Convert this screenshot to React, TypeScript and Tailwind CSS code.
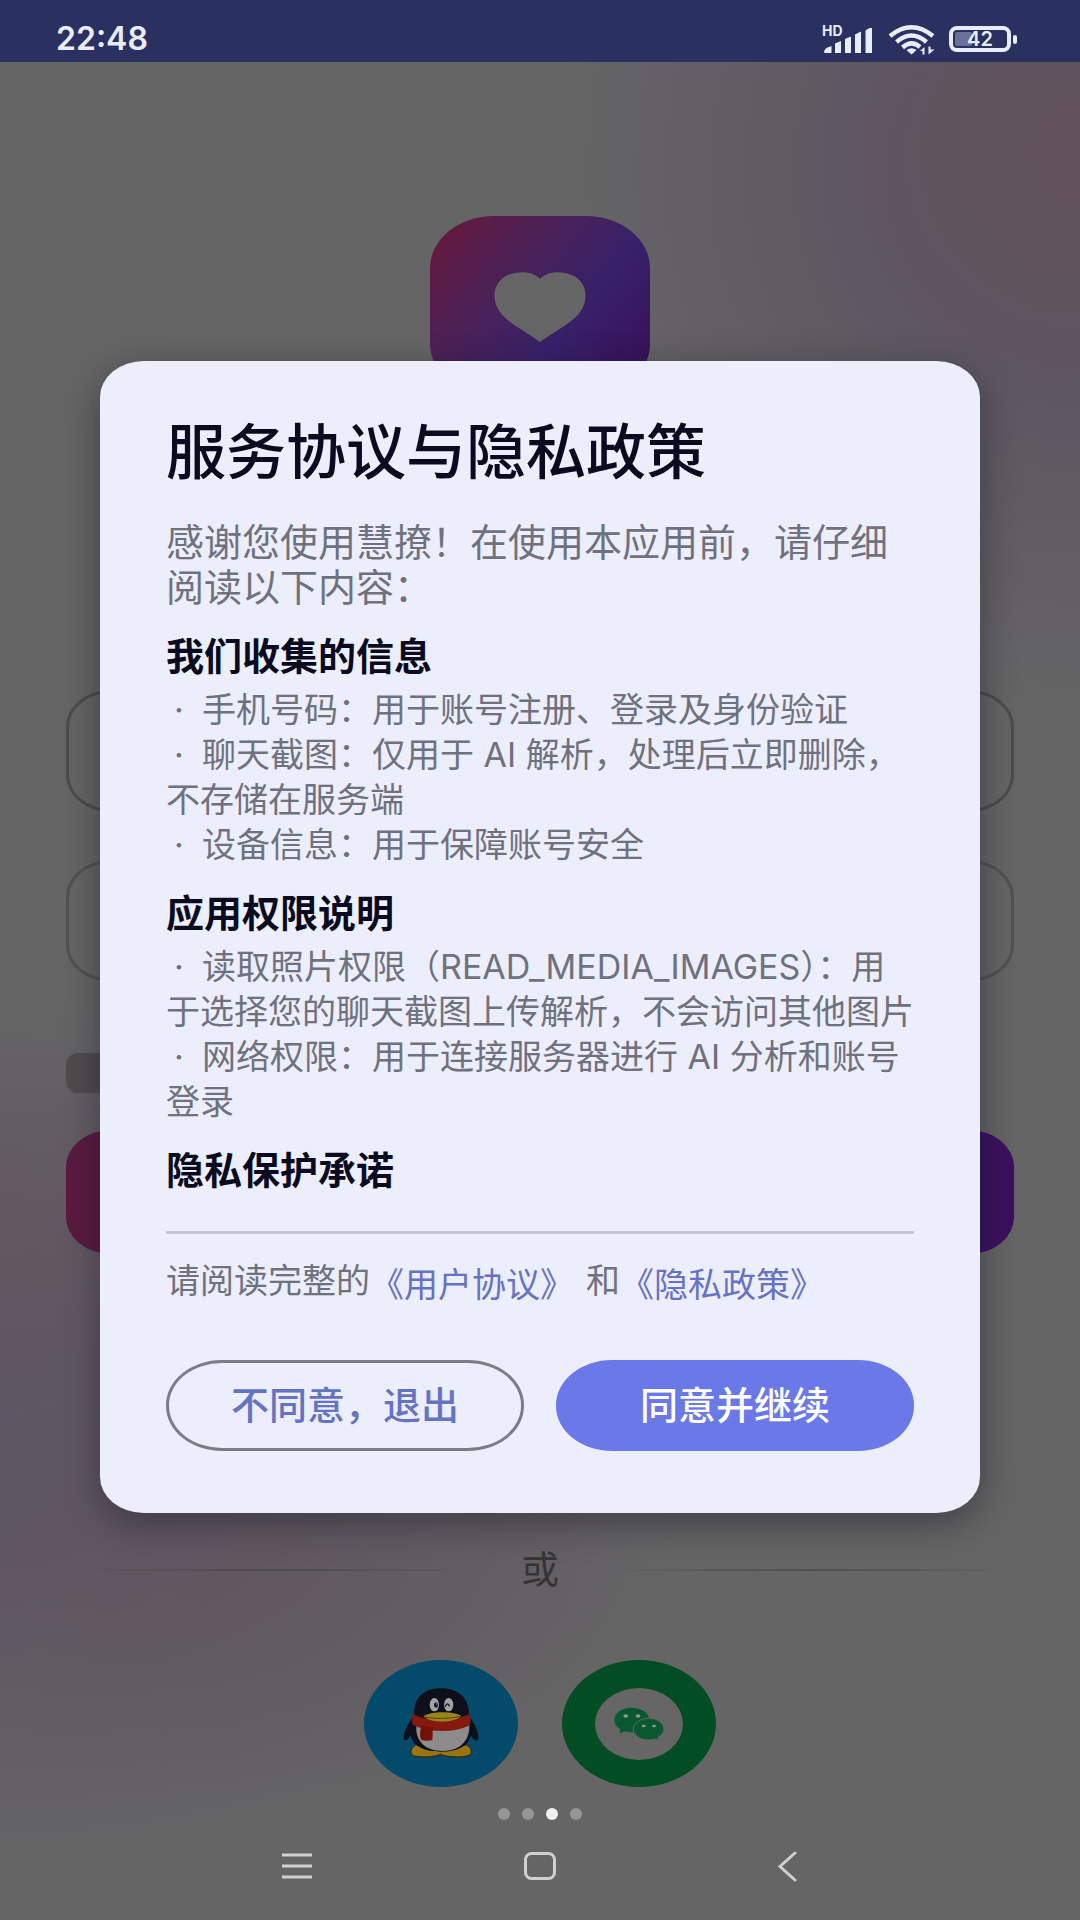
// App.tsx
import { useState } from "react";

const sections = [
    {
        title: "我们收集的信息",
        items: [
            ["手机号码：用于账号注册、登录及身份验证"],
            ["聊天截图：仅用于 AI 解析，处理后立即删除，", "不存储在服务端"],
            ["设备信息：用于保障账号安全"],
        ],
    },
    {
        title: "应用权限说明",
        items: [
            ["读取照片权限（READ_MEDIA_IMAGES）：用", "于选择您的聊天截图上传解析，不会访问其他图片"],
            ["网络权限：用于连接服务器进行 AI 分析和账号", "登录"],
        ],
    },
    { title: "隐私保护承诺", items: [] },
];

function StatusBar() {
    return (
        <header className="flex h-[62px] items-end justify-between bg-[#2a3060] pr-[62px] pb-[3px] pl-14 text-[#e9edfb]">
            <span className="text-[32px] leading-10 font-semibold">22:48</span>
            <div className="flex items-center gap-[14px] pb-1">
                <svg className="h-8 w-[52px]" viewBox="0 0 52 32" fill="currentColor">
                    <text x="0" y="13" fontSize="14" fontWeight="700">HD</text>
                    <path d="M2 29q0-4 7.500-6v7h-6q-1.500 0-1.500-1z" />
                    <path d="M13 20.500l6-2.500V30h-6z" />
                    <path d="M23 16l6-2.500V30h-6z" />
                    <path d="M33 11.500l6-3V30h-6z" />
                    <path d="M43.500 7.500l4-2.500h2.500V30h-6.500z" />
                </svg>
                <svg className="h-8 w-[47px]" viewBox="0 0 47 32" fill="none" stroke="currentColor" strokeWidth="4.500">
                    <path d="M2 13Q23.500-4.500 45 13" />
                    <path d="M8.500 19Q23.500 6 38.500 19" />
                    <path d="M14.500 24.500Q23.500 16.500 32 24" />
                    <path d="M18.500 27q5-3.500 10 0l-5 4.500z" fill="currentColor" stroke="none" />
                    <path d="M36.500 31.500v-7.500l-4.500 4h2.500v3.500zM40.500 31.500v-8h2v3h4z" fill="currentColor" stroke="none" />
                </svg>
                <svg className="h-8 w-[69px]" viewBox="0 0 69 32">
                    <rect x="6" y="9" width="17" height="14" rx="2" fill="#6a7098" />
                    <rect x="2" y="5" width="58" height="22" rx="6" fill="none" stroke="currentColor" strokeWidth="4" />
                    <rect x="64" y="12" width="4" height="9" rx="2" fill="currentColor" />
                    <text x="31" y="23" fontSize="20" fontWeight="600" textAnchor="middle" fill="currentColor">42</text>
                </svg>
            </div>
        </header>
    );
}

function QQIcon() {
    return (
        <svg className="h-[71px] w-[76px]" viewBox="190 205 228 213">
            <path d="M228 376c-14 8-18 22-10 31 14 8 74 6 84-4 12 10 74 12 88 3 10-9 3-23-8-30z" fill="#9a7412" stroke="#2c220a" strokeWidth="3" />
            <path d="M224 288c-22 26-34 52-31 70 4 8 14 2 20-12 6 34 42 50 92 50s84-18 88-50c8 16 20 22 23 12 2-20-10-46-29-70z" fill="#0c0f19" />
            <path d="M224 292c-6-56 26-86 80-86s88 32 83 86z" fill="#0d0f1a" />
            <path d="M231 310c-8 52 24 84 78 84s86-34 79-86z" fill="#8d8b8b" />
            <path d="M218 282c0 18-2 28 2 34 52 24 122 24 168 2 6-8 6-22 2-36-48 26-124 26-172 0z" fill="#86190f" />
            <path d="M246 318c-6 14-6 34-1 43 10 3 24 3 33 0 2-12 0-28 2-38z" fill="#731109" />
            <path d="M251 290c18-14 88-18 114-1-16 20-92 24-114 1z" fill="#9a851a" />
            <path d="M254 292c34 6 74 6 108-2" fill="none" stroke="#544307" strokeWidth="3" />
            <ellipse cx="284" cy="255" rx="14" ry="20" fill="#a3a3a5" />
            <ellipse cx="327" cy="255" rx="14" ry="20" fill="#a3a3a5" />
            <ellipse cx="289" cy="256" rx="6" ry="8" fill="#11131d" />
            <circle cx="291" cy="253" r="2" fill="#a3a3a5" />
            <path d="M317 260q6-14 12-1" fill="none" stroke="#11131d" strokeWidth="4" strokeLinecap="round" />
        </svg>
    );
}

function WechatIcon() {
    return (
        <svg className="h-[34px] w-[50px]" viewBox="822 260 150 100">
            <path d="M875 261c-29 0-52 16-52 37 0 12 8 22 18 28l-3 13 16-7c46 12 74-10 74-34 0-21-24-37-53-37z" fill="#0a5831" />
            <path d="M926 293c-26 0-46 14-46 33s20 32 46 32c8 0 15-1 21-3l10 5-3-10c10-6 18-14 18-24 0-19-20-33-46-33z" fill="#0a5831" stroke="#666" strokeWidth="3" />
            <g fill="#8c9a90">
                <ellipse cx="857" cy="286" rx="7" ry="5" />
                <ellipse cx="894" cy="286" rx="7" ry="5" />
                <ellipse cx="911" cy="316" rx="6" ry="4" />
                <ellipse cx="942" cy="316" rx="6" ry="4" />
            </g>
        </svg>
    );
}

function LoginPage() {
    return (
        <main className="flex flex-col items-center px-[66px] pt-[154px]">
            <div className="flex h-[180px] w-[220px] justify-center rounded-[64px/52px] bg-[linear-gradient(130deg,#621a40_8%,#4a2158_35%,#38216a_62%,#380f58_95%)] pt-14">
                <svg className="h-[70px] w-[92px]" viewBox="0 0 92 70" fill="#666">
                    <path d="M46 7C38-2 22-1 12 4 0 11-2 24 3 35c6 14 27 23 43 35 16-12 37-21 43-35 5-11 3-24-9-31C70-1 54-2 46 7z" />
                </svg>
            </div>

            <form className="mt-[294px] flex w-full flex-col" onSubmit={(e) => e.preventDefault()}>
                <input aria-label="手机号" type="tel" className="h-[122px] w-full rounded-[45px/37px] border-[3px] border-[#4c4c4c]" />
                <input aria-label="验证码" type="text" className="mt-12 h-[122px] w-full rounded-[45px/37px] border-[3px] border-[#505252]" />
                <input aria-label="同意协议" type="checkbox" className="mt-[71px] h-10 w-14 appearance-none rounded-xl bg-[#4e4c4d]" />
                <button aria-label="登录" className="mt-[37px] h-[124px] w-full rounded-[45px/37px] bg-linear-to-r from-[#5b1a40] to-[#3b1060]" />
            </form>

            <div className="mt-[293px] flex w-full items-center gap-12">
                <div className="h-[2px] flex-1 bg-linear-to-r from-transparent via-[#504c4f] to-transparent" />
                <span className="text-[38px] leading-[45px] text-[#343434]">或</span>
                <div className="h-[2px] flex-1 bg-linear-to-r from-transparent via-[#504f4f] to-transparent" />
            </div>

            <div className="mt-[68px] flex gap-11">
                <button aria-label="QQ" className="flex h-[127px] w-[154px] items-center justify-center rounded-[50%] bg-[#044a6a]">
                    <QQIcon />
                </button>
                <button aria-label="微信" className="flex h-[127px] w-[154px] items-center justify-center rounded-[50%] bg-[#034d25]">
                    <span className="flex h-[72px] w-[88px] items-center justify-center rounded-[50%] bg-[#666]">
                        <WechatIcon />
                    </span>
                </button>
            </div>
        </main>
    );
}

function NavBar() {
    return (
        <nav className="flex flex-col items-center pt-[21px] pb-9 text-[#d0d0d0]">
            <div className="flex gap-3">
                <i className="size-3 rounded-full bg-[#959595]" />
                <i className="size-3 rounded-full bg-[#959595]" />
                <i className="size-3 rounded-full bg-[#f0f0f0]" />
                <i className="size-3 rounded-full bg-[#959595]" />
            </div>
            <div className="mt-[30px] flex w-full items-center justify-between px-[281px]">
                <button aria-label="菜单">
                    <svg className="h-8 w-8" viewBox="0 0 32 32" stroke="currentColor" strokeWidth="3">
                        <path d="M1 5h30M1 16h30M1 27h30" />
                    </svg>
                </button>
                <button aria-label="主页">
                    <svg className="h-8 w-8" viewBox="0 0 32 32" fill="none" stroke="currentColor" strokeWidth="3">
                        <rect x="1.500" y="3.500" width="29" height="25" rx="6" />
                    </svg>
                </button>
                <button aria-label="返回">
                    <svg className="h-8 w-8" viewBox="0 0 32 32" fill="none" stroke="currentColor" strokeWidth="3" strokeLinecap="round">
                        <path d="M28 3L13 16.500 28 30" />
                    </svg>
                </button>
            </div>
        </nav>
    );
}

function PrivacyDialog({ onClose }: { onClose: () => void }) {
    return (
        <div className="absolute inset-x-0 top-0 px-[100px] pt-[361px]">
            <div
                role="dialog"
                aria-labelledby="dialog-title"
                className="rounded-[44px/36px] bg-[#edeefc] px-[66px] pt-[61px] pb-[62px] shadow-[0_10px_36px_rgba(20,20,30,0.45)]"
            >
                <h1 id="dialog-title" className="text-[60px] leading-[60px] font-medium text-[#0a0b20]">
                    服务协议与隐私政策
                </h1>
                <p className="mt-[38px] text-[38px] leading-[45px] text-[#6f717e]">
                    感谢您使用慧撩！在使用本应用前，请仔细
                    <br />
                    阅读以下内容：
                </p>

                {sections.map((section) => (
                    <section key={section.title} className="mt-6">
                        <h2 className="text-[38px] leading-[45px] font-bold text-[#0a0b20]">{section.title}</h2>
                        {section.items.length > 0 && (
                            <ul className="mt-2 text-[34px] leading-[45px] text-[#6f717e]">
                                {section.items.map((lines) => (
                                    <li key={lines[0]}>
                                        <span className="inline-block w-9 pl-2">·</span>
                                        {lines[0]}
                                        {lines[1] && <br />}
                                        {lines[1]}
                                    </li>
                                ))}
                            </ul>
                        )}
                    </section>
                ))}

                <hr className="mt-[38px] border-t-[3px] border-[#c3c4d1]" />

                <p className="mt-6 flex text-[34px] leading-[45px] text-[#6f717e]">
                    请阅读完整的
                    <a href="#terms" className="pt-1 text-[#6573c4]">《用户协议》</a>
                    <span className="pl-3">和</span>
                    <a href="#privacy" className="pt-1 text-[#6573c4]">《隐私政策》</a>
                </p>

                <div className="mt-[53px] grid grid-cols-2 gap-8 text-[38px] leading-[45px] font-medium">
                    <button onClick={onClose} className="h-[91px] rounded-[56px/45px] border-[3px] border-[#7a7c88] text-[#6573c4]">
                        不同意，退出
                    </button>
                    <button onClick={onClose} className="h-[91px] rounded-[56px/45px] bg-[#6b78e8] text-white">
                        同意并继续
                    </button>
                </div>
            </div>
        </div>
    );
}

export default function App() {
    const [open, setOpen] = useState(true);

    return (
        <div className="relative min-h-screen bg-[#656565] bg-[radial-gradient(ellipse_260px_260px_at_100%_8%,#66505499,transparent),radial-gradient(ellipse_520px_540px_at_100%_9%,#5d5562_35%,transparent),radial-gradient(ellipse_260px_200px_at_0%_64%,#66545c80,transparent),radial-gradient(ellipse_420px_220px_at_22%_82%,#64545e80,transparent),radial-gradient(ellipse_700px_440px_at_0%_75%,#5e5664_25%,transparent)] font-['Inter','Noto_Sans_CJK_SC',sans-serif]">
            <StatusBar />
            <LoginPage />
            <NavBar />
            {open && <PrivacyDialog onClose={() => setOpen(false)} />}
        </div>
    );
}
